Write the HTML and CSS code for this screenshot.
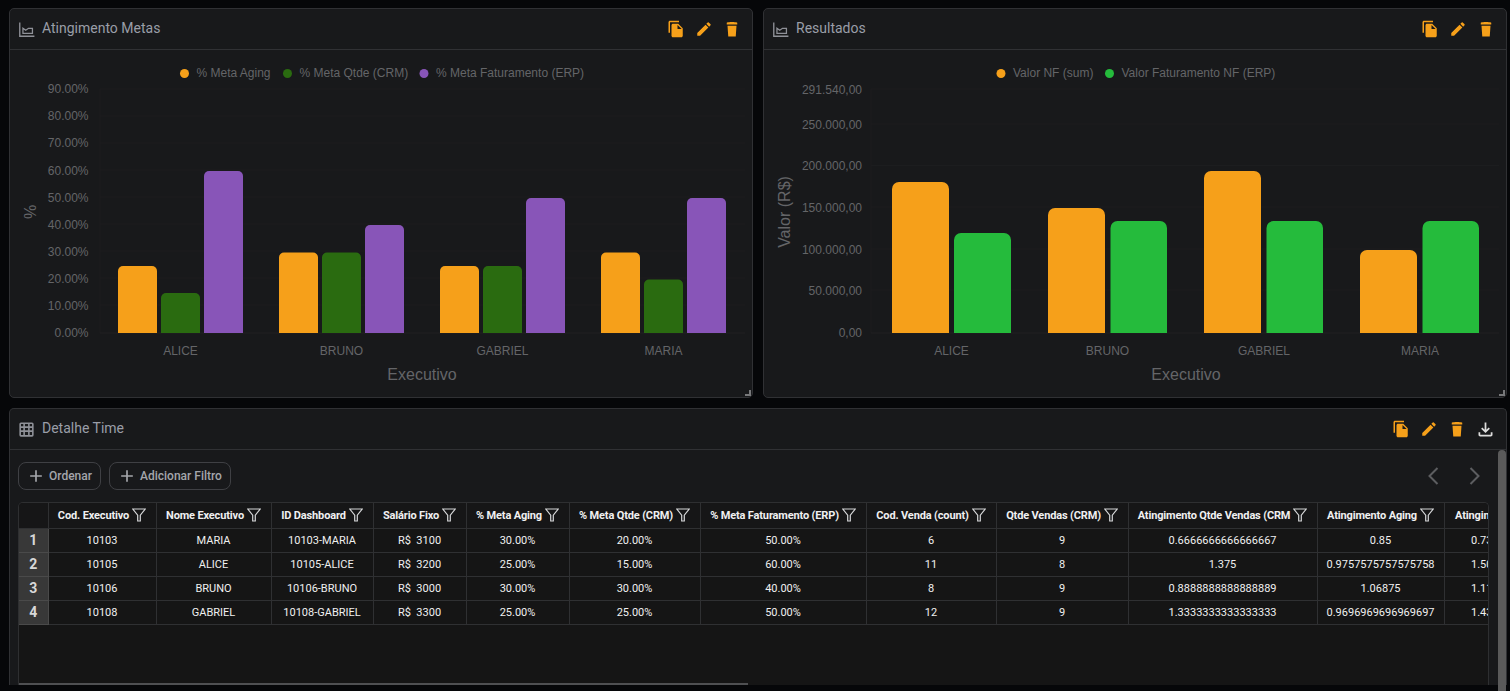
FILE: index.html
```html
<!DOCTYPE html>
<html lang="pt-BR">
<head>
<meta charset="utf-8">
<title>Dashboard</title>
<link rel="stylesheet" href="styles.css">
</head>
<body>
<svg class="defs" aria-hidden="true">
  <defs>
    <symbol id="i-chart" viewBox="0 0 24 24"><path d="M3.5 3v17.500H22" fill="none" stroke="currentColor" stroke-width="1.7"/><path d="M7.500 16.800v-6.300l3.500 2.500 3.500-2.500 5 0v6.300z" fill="none" stroke="currentColor" stroke-width="1.6"/></symbol>
    <symbol id="i-table" viewBox="0 0 24 24"><path d="M5 3h14a2 2 0 0 1 2 2v14a2 2 0 0 1-2 2H5a2 2 0 0 1-2-2V5a2 2 0 0 1 2-2zm0 2v3h3V5zm5 0v3h4V5zm6 0v3h3V5zM5 10v3h3v-3zm5 0v3h4v-3zm6 0v3h3v-3zM5 15v4h3v-4zm5 0v4h4v-4zm6 0v4h3v-4z" fill="currentColor" fill-rule="evenodd"/></symbol>
    <symbol id="i-copy" viewBox="0 0 24 24"><path d="M16 1H4c-1.100 0-2 .9-2 2v14h2V3h12V1zm-1 4 6 6v10c0 1.100-.9 2-2 2H7.990C6.890 23 6 22.100 6 21l.01-14c0-1.100.89-2 1.990-2h7zm-1 7h5.500L14 6.500V12z" fill="currentColor"/></symbol>
    <symbol id="i-edit" viewBox="0 0 24 24"><path d="M3 17.250V21h3.750L17.810 9.940l-3.750-3.750L3 17.250zM20.710 7.040c.39-.39.39-1.020 0-1.410l-2.340-2.340a.996.996 0 0 0-1.410 0l-1.830 1.830 3.750 3.750 1.830-1.830z" fill="currentColor"/></symbol>
    <symbol id="i-trash" viewBox="0 0 24 24"><path d="M5 3.500C8 2.500 16 2.500 19 3.500v2.500H5zM6 7.500h12l-1 14.500H7z" fill="currentColor"/></symbol>
    <symbol id="i-down" viewBox="0 0 24 24"><path d="M18 15v3H6v-3H4v3c0 1.100.9 2 2 2h12c1.100 0 2-.9 2-2v-3h-2zm-1-4-1.410-1.410L13 12.170V4h-2v8.170L8.410 9.590 7 11l5 5 5-5z" fill="currentColor"/></symbol>
    <symbol id="i-plus" viewBox="0 0 24 24"><path d="M19 13h-6v6h-2v-6H5v-2h6V5h2v6h6z" fill="currentColor"/></symbol>
    <symbol id="i-filter" viewBox="0 0 14 14"><path d="M.8 1h12.400L8.300 7.200V13H5.700V7.200z" fill="none" stroke="currentColor" stroke-width="1.200"/></symbol>
  </defs>
</svg>

<main class="dash">
  <section class="card">
    <header class="card-head">
      <svg class="ico-title"><use href="#i-chart"/></svg>
      <h2 class="card-title">Atingimento Metas</h2>
      <div class="actions">
        <svg class="ico-act"><use href="#i-copy"/></svg>
        <svg class="ico-act"><use href="#i-edit"/></svg>
        <svg class="ico-act"><use href="#i-trash"/></svg>
      </div>
    </header>
    <svg class="chart" viewBox="10 50 742 347">
      <g class="grid">
        <path d="M100 89H745M100 116H745M100 143H745M100 170H745M100 197H745M100 224H745M100 251H745M100 278H745M100 305H745M100 89V333"/>
      </g>
      <path class="axis" d="M100 333H745"/>
      <g class="legend">
        <circle class="orange" cx="184.500" cy="73.500" r="4.500"/><text x="196.500" y="77">% Meta Aging</text>
        <circle class="dgreen" cx="287.500" cy="73.500" r="4.500"/><text x="299.500" y="77">% Meta Qtde (CRM)</text>
        <circle class="purple" cx="424" cy="73.500" r="4.500"/><text x="436" y="77">% Meta Faturamento (ERP)</text>
      </g>
      <g class="ticks" text-anchor="end">
        <text x="88.500" y="93">90.00%</text><text x="88.500" y="120">80.00%</text><text x="88.500" y="147">70.00%</text>
        <text x="88.500" y="174.500">60.00%</text><text x="88.500" y="201.500">50.00%</text><text x="88.500" y="228.500">40.00%</text>
        <text x="88.500" y="256">30.00%</text><text x="88.500" y="283">20.00%</text><text x="88.500" y="310">10.00%</text>
        <text x="88.500" y="337">0.00%</text>
      </g>
      <g class="orange">
        <path d="M118 333V271a5 5 0 0 1 5-5h29a5 5 0 0 1 5 5V333z"/>
        <path d="M279 333V257.500a5 5 0 0 1 5-5h29a5 5 0 0 1 5 5V333z"/>
        <path d="M440 333V271a5 5 0 0 1 5-5h29a5 5 0 0 1 5 5V333z"/>
        <path d="M601 333V257.500a5 5 0 0 1 5-5h29a5 5 0 0 1 5 5V333z"/>
      </g>
      <g class="dgreen">
        <path d="M161 333V298a5 5 0 0 1 5-5h29a5 5 0 0 1 5 5V333z"/>
        <path d="M322 333V257.500a5 5 0 0 1 5-5h29a5 5 0 0 1 5 5V333z"/>
        <path d="M483 333V271a5 5 0 0 1 5-5h29a5 5 0 0 1 5 5V333z"/>
        <path d="M644 333V284.500a5 5 0 0 1 5-5h29a5 5 0 0 1 5 5V333z"/>
      </g>
      <g class="purple">
        <path d="M204 333V176a5 5 0 0 1 5-5h29a5 5 0 0 1 5 5V333z"/>
        <path d="M365 333V230a5 5 0 0 1 5-5h29a5 5 0 0 1 5 5V333z"/>
        <path d="M526 333V203a5 5 0 0 1 5-5h29a5 5 0 0 1 5 5V333z"/>
        <path d="M687 333V203a5 5 0 0 1 5-5h29a5 5 0 0 1 5 5V333z"/>
      </g>
      <g class="ticks" text-anchor="middle">
        <text x="180.500" y="355">ALICE</text><text x="341.500" y="355">BRUNO</text><text x="502.500" y="355">GABRIEL</text><text x="663.500" y="355">MARIA</text>
      </g>
      <text class="axis-title" x="422" y="380" text-anchor="middle">Executivo</text>
      <text class="axis-title" transform="translate(36 212) rotate(-90)" text-anchor="middle">%</text>
    </svg>
    <span class="resize"></span>
  </section>

  <section class="card">
    <header class="card-head">
      <svg class="ico-title"><use href="#i-chart"/></svg>
      <h2 class="card-title">Resultados</h2>
      <div class="actions">
        <svg class="ico-act"><use href="#i-copy"/></svg>
        <svg class="ico-act"><use href="#i-edit"/></svg>
        <svg class="ico-act"><use href="#i-trash"/></svg>
      </div>
    </header>
    <svg class="chart" viewBox="764 50 742 347">
      <g class="grid">
        <path d="M871 89H1499M871 124H1499M871 165.500H1499M871 207H1499M871 249H1499M871 290H1499M871 89V333"/>
      </g>
      <path class="axis" d="M871 333H1499"/>
      <g class="legend">
        <circle class="orange" cx="1001" cy="73.500" r="4.500"/><text x="1013" y="77">Valor NF (sum)</text>
        <circle class="green" cx="1109.500" cy="73.500" r="4.500"/><text x="1121.500" y="77">Valor Faturamento NF (ERP)</text>
      </g>
      <g class="ticks" text-anchor="end">
        <text x="862" y="93.500">291.540,00</text><text x="862" y="128.500">250.000,00</text><text x="862" y="170">200.000,00</text>
        <text x="862" y="211.500">150.000,00</text><text x="862" y="253.500">100.000,00</text><text x="862" y="294.500">50.000,00</text>
        <text x="862" y="336.500">0,00</text>
      </g>
      <g class="orange">
        <path d="M892 333V189a7 7 0 0 1 7-7h43a7 7 0 0 1 7 7V333z"/>
        <path d="M1048 333V215a7 7 0 0 1 7-7h43a7 7 0 0 1 7 7V333z"/>
        <path d="M1204 333V178a7 7 0 0 1 7-7h43a7 7 0 0 1 7 7V333z"/>
        <path d="M1360 333V257a7 7 0 0 1 7-7h43a7 7 0 0 1 7 7V333z"/>
      </g>
      <g class="green">
        <path d="M954 333V240a7 7 0 0 1 7-7h43a7 7 0 0 1 7 7V333z"/>
        <path d="M1110.500 333V228a7 7 0 0 1 7-7h42.500a7 7 0 0 1 7 7V333z"/>
        <path d="M1266.500 333V228a7 7 0 0 1 7-7h42.500a7 7 0 0 1 7 7V333z"/>
        <path d="M1422.500 333V228a7 7 0 0 1 7-7h42.500a7 7 0 0 1 7 7V333z"/>
      </g>
      <g class="ticks" text-anchor="middle">
        <text x="951.500" y="355">ALICE</text><text x="1107.500" y="355">BRUNO</text><text x="1264" y="355">GABRIEL</text><text x="1420" y="355">MARIA</text>
      </g>
      <text class="axis-title" x="1186" y="380" text-anchor="middle">Executivo</text>
      <text class="axis-title" transform="translate(790 212) rotate(-90)" text-anchor="middle">Valor (R$)</text>
    </svg>
    <span class="resize"></span>
  </section>

  <section class="card card-wide">
    <header class="card-head">
      <svg class="ico-title"><use href="#i-table"/></svg>
      <h2 class="card-title">Detalhe Time</h2>
      <div class="actions">
        <svg class="ico-act"><use href="#i-copy"/></svg>
        <svg class="ico-act"><use href="#i-edit"/></svg>
        <svg class="ico-act"><use href="#i-trash"/></svg>
        <svg class="ico-act ico-light"><use href="#i-down"/></svg>
      </div>
    </header>
    <div class="card-body">
      <div class="toolbar">
        <button class="btn"><svg class="ico-plus"><use href="#i-plus"/></svg>Ordenar</button>
        <button class="btn"><svg class="ico-plus"><use href="#i-plus"/></svg>Adicionar Filtro</button>
        <div class="pager">
          <svg class="chev" viewBox="0 0 16 20"><path d="M11.500 2 3.500 10l8 8"/></svg>
          <svg class="chev" viewBox="0 0 16 20"><path d="m4.500 2 8 8-8 8"/></svg>
        </div>
      </div>
      <div class="table-box">
        <table class="data">
          <colgroup>
            <col class="c0"><col class="c1"><col class="c2"><col class="c3"><col class="c4"><col class="c5"><col class="c6"><col class="c7"><col class="c8"><col class="c9"><col class="c10"><col class="c11"><col class="c12">
          </colgroup>
          <thead>
            <tr>
              <th></th>
              <th><span class="th">Cod. Executivo<svg class="ico-filter"><use href="#i-filter"/></svg></span></th>
              <th><span class="th">Nome Executivo<svg class="ico-filter"><use href="#i-filter"/></svg></span></th>
              <th><span class="th">ID Dashboard<svg class="ico-filter"><use href="#i-filter"/></svg></span></th>
              <th><span class="th">Salário Fixo<svg class="ico-filter"><use href="#i-filter"/></svg></span></th>
              <th><span class="th">% Meta Aging<svg class="ico-filter"><use href="#i-filter"/></svg></span></th>
              <th><span class="th">% Meta Qtde (CRM)<svg class="ico-filter"><use href="#i-filter"/></svg></span></th>
              <th><span class="th">% Meta Faturamento (ERP)<svg class="ico-filter"><use href="#i-filter"/></svg></span></th>
              <th><span class="th">Cod. Venda (count)<svg class="ico-filter"><use href="#i-filter"/></svg></span></th>
              <th><span class="th">Qtde Vendas (CRM)<svg class="ico-filter"><use href="#i-filter"/></svg></span></th>
              <th><span class="th">Atingimento Qtde Vendas (CRM<svg class="ico-filter"><use href="#i-filter"/></svg></span></th>
              <th><span class="th">Atingimento Aging<svg class="ico-filter"><use href="#i-filter"/></svg></span></th>
              <th><span class="th">Atingimento Faturamento<svg class="ico-filter"><use href="#i-filter"/></svg></span></th>
            </tr>
          </thead>
          <tbody>
            <tr><th class="idx">1</th><td>10103</td><td>MARIA</td><td>10103-MARIA</td><td>R$&nbsp; 3100</td><td>30.00%</td><td>20.00%</td><td>50.00%</td><td>6</td><td>9</td><td>0.6666666666666667</td><td>0.85</td><td>0.7333333333333333</td></tr>
            <tr><th class="idx">2</th><td>10105</td><td>ALICE</td><td>10105-ALICE</td><td>R$&nbsp; 3200</td><td>25.00%</td><td>15.00%</td><td>60.00%</td><td>11</td><td>8</td><td>1.375</td><td>0.9757575757575758</td><td>1.5066666666666666</td></tr>
            <tr><th class="idx">3</th><td>10106</td><td>BRUNO</td><td>10106-BRUNO</td><td>R$&nbsp; 3000</td><td>30.00%</td><td>30.00%</td><td>40.00%</td><td>8</td><td>9</td><td>0.8888888888888889</td><td>1.06875</td><td>1.1166666666666667</td></tr>
            <tr><th class="idx">4</th><td>10108</td><td>GABRIEL</td><td>10108-GABRIEL</td><td>R$&nbsp; 3300</td><td>25.00%</td><td>25.00%</td><td>50.00%</td><td>12</td><td>9</td><td>1.3333333333333333</td><td>0.9696969696969697</td><td>1.4333333333333333</td></tr>
          </tbody>
        </table>
        <span class="hbar"></span>
      </div>
      <span class="vbar"></span>
    </div>
  </section>
</main>
</body>
</html>
```

FILE: styles.css
```css
* { box-sizing: border-box; }

html, body {
  margin: 0;
  height: 100%;
  overflow: hidden;
  background: #060709;
}

.defs { position: absolute; width: 0; height: 0; }

.dash {
  display: grid;
  grid-template-columns: 744px 744px;
  grid-template-rows: 390px 277px;
  column-gap: 10px;
  row-gap: 10px;
  padding: 8px 4px 0 9px;
}

.card {
  position: relative;
  display: flex;
  flex-direction: column;
  background: #18191b;
  border: 1px solid #303134;
  border-radius: 5px;
  overflow: hidden;
  font-family: Roboto, sans-serif;
}

.card-wide {
  grid-column: 1 / 3;
  overflow: visible;
  border-bottom: 0;
  border-radius: 5px 5px 0 0;
}

.card-wide .card-head { padding-right: 12px; }

.card-head {
  flex: none;
  display: flex;
  align-items: center;
  height: 41px;
  padding: 0 11px 0 7px;
  border-bottom: 1px solid #303134;
}

.ico-title { width: 19px; height: 19px; margin-right: 6px; color: #8f9198; flex: none; }

.card-title {
  margin: 0;
  padding-bottom: 2px;
  font-size: 14px;
  font-weight: 400;
  color: #9a9ea8;
}

.actions { margin-left: auto; display: flex; align-items: center; gap: 10px; }

.ico-act { width: 18px; height: 18px; color: #f6a01a; }
.ico-light { width: 21px; height: 21px; margin: 0 -1.500px; color: #dcdcdc; }

.chart {
  display: block;
  flex: 1;
  width: 100%;
  min-height: 0;
  font-family: "Liberation Sans", Arial, sans-serif;
}

.grid path { fill: none; stroke: #1c1d1f; stroke-width: 1; }
.axis { fill: none; stroke: #202123; stroke-width: 1; }

.legend text { font-size: 12px; fill: #646568; }
.ticks text { font-size: 12px; fill: #646568; }
.axis-title { font-size: 16px; fill: #646568; }

.orange { fill: #f6a01a; }
.dgreen { fill: #2a6b10; }
.purple { fill: #8855b8; }
.green { fill: #25bb3c; }

.resize {
  position: absolute;
  right: 1px;
  bottom: 1px;
  width: 6px;
  height: 6px;
  border-right: 2px solid #77787a;
  border-bottom: 2px solid #77787a;
}

.card-body {
  position: relative;
  flex: 1;
  min-height: 0;
  padding: 12px 8px 0;
}

.toolbar {
  display: flex;
  align-items: center;
  gap: 8px;
  height: 28px;
  margin-bottom: 12px;
}

.btn {
  display: flex;
  align-items: center;
  height: 28px;
  padding: 0 8px 0 7px;
  background: transparent;
  border: 1px solid #3f4044;
  border-radius: 8px;
  color: #a4a6ab;
  font: 500 12px Roboto, sans-serif;
}

.ico-plus { width: 20px; height: 20px; margin-right: 3px; color: #a4a6ab; }

.pager { margin-left: auto; display: flex; gap: 24px; margin-right: 16px; }

.chev { width: 16px; height: 20px; fill: none; stroke: #5c5d60; stroke-width: 2; }

.table-box {
  position: relative;
  width: 1471px;
  height: 183px;
  border: 1px solid #2e2f31;
  border-bottom: 0;
  border-radius: 5px 5px 0 0;
  overflow: hidden;
  background: #151515;
}

.data {
  border-collapse: collapse;
  table-layout: fixed;
  width: 1587px;
  color: #f0f0f0;
  font: 400 11px Roboto, sans-serif;
}

.c0 { width: 29px; }
.c1 { width: 108px; }
.c2 { width: 115px; }
.c3 { width: 102px; }
.c4 { width: 93px; }
.c5 { width: 103px; }
.c6 { width: 131px; }
.c7 { width: 166px; }
.c8 { width: 130px; }
.c9 { width: 132px; }
.c10 { width: 189px; }
.c11 { width: 127px; }
.c12 { width: 162px; }

.data th, .data td {
  padding: 0;
  height: 24px;
  border: 1px solid #2f3032;
  text-align: center;
  white-space: nowrap;
  overflow: hidden;
}

.data thead th {
  height: 25px;
  border-top: 0;
  font-weight: 700;
  letter-spacing: -.15px;
  background: #161617;
  color: #f0f0f1;
}

.data th:first-child { border-left: 0; }

.th { display: inline-flex; align-items: center; gap: 3px; }

.ico-filter { width: 14px; height: 14px; color: #d4d5d7; flex: none; }

.data .idx {
  background: #383838;
  color: #d8d8d8;
  font-size: 14px;
  font-weight: 700;
  border-color: #4a4a4a;
}

.hbar {
  position: absolute;
  left: 0;
  bottom: 0;
  width: 729px;
  height: 2px;
  background: #4f5052;
}

.vbar {
  position: absolute;
  top: 0;
  right: 0;
  width: 8px;
  height: 241px;
  border-radius: 4px 4px 0 0;
  background: #5a5a5a;
}
```
